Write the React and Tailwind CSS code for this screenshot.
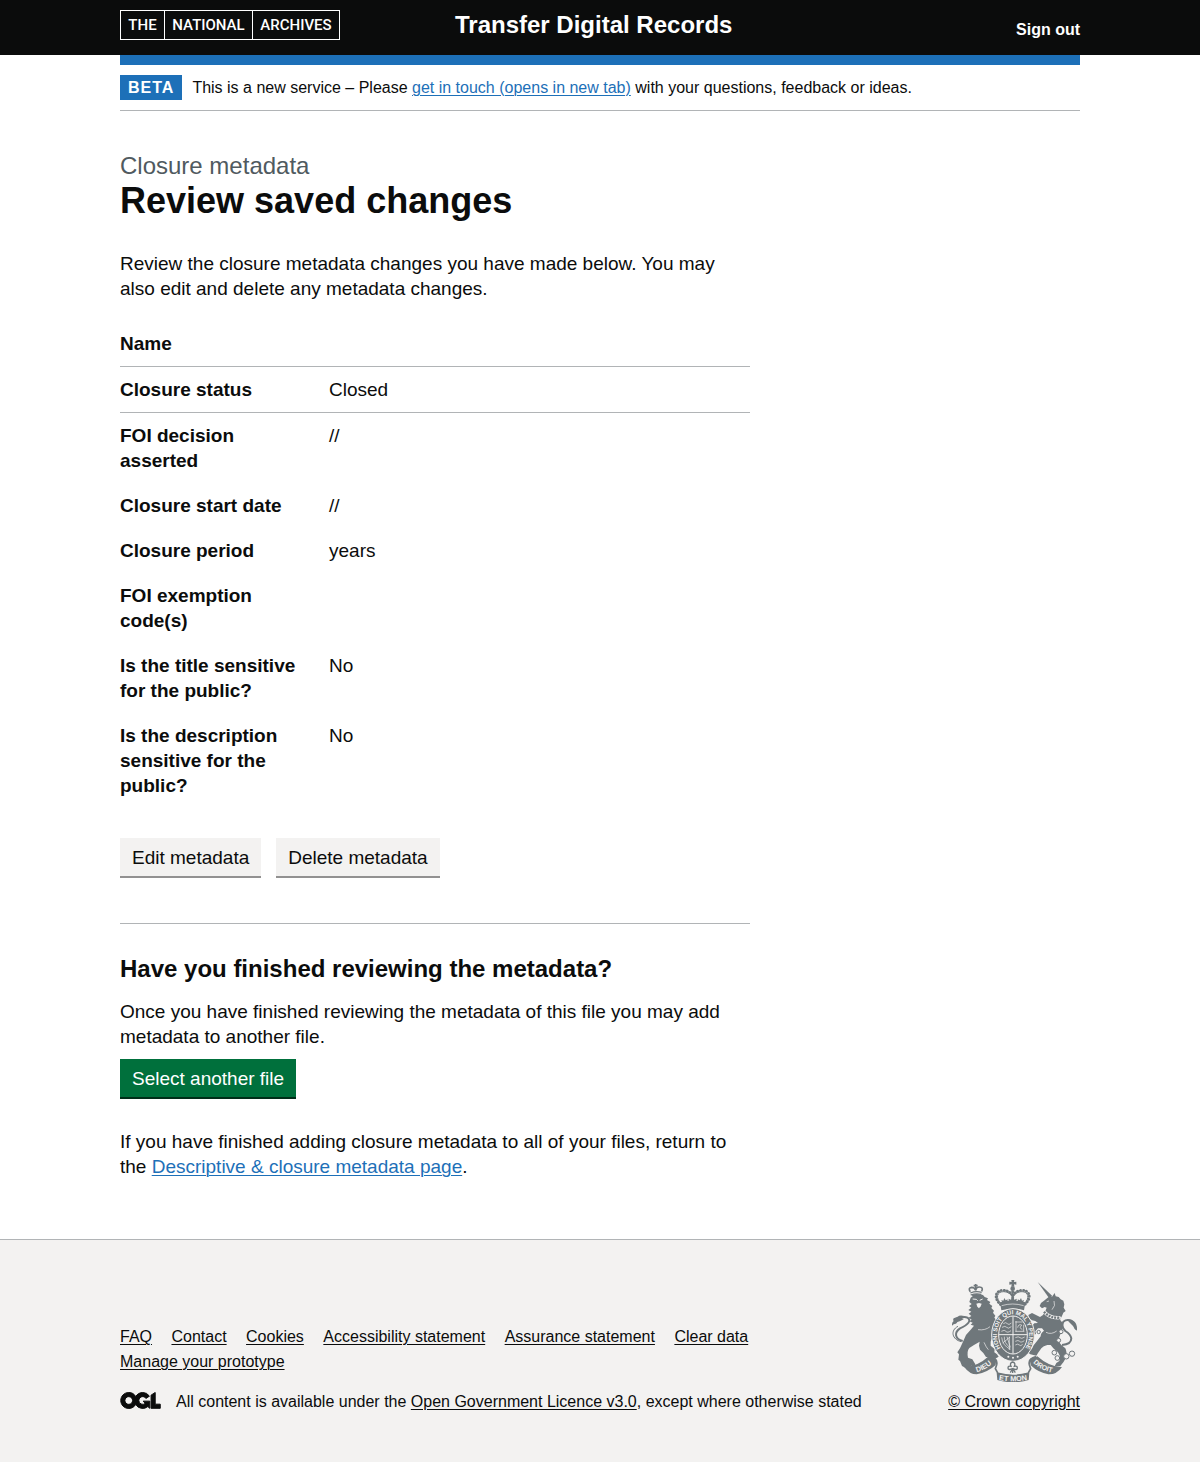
import React from "react";

const summaryRows = [
  { label: "Name", value: "", ruled: true },
  { label: "Closure status", value: "Closed", ruled: true },
  { label: "FOI decision asserted", value: "//" },
  { label: "Closure start date", value: "//" },
  { label: "Closure period", value: "years" },
  { label: "FOI exemption code(s)", value: "" },
  { label: "Is the title sensitive for the public?", value: "No" },
  { label: "Is the description sensitive for the public?", value: "No" },
];

const footerLinks = [
  "FAQ",
  "Contact",
  "Cookies",
  "Accessibility statement",
  "Assurance statement",
  "Clear data",
  "Manage your prototype",
];

function ArchivesLogo() {
  return (
    <a
      href="#"
      aria-label="The National Archives"
      className="flex h-[30px] w-[220px] border border-white font-[Roboto,sans-serif] text-[15px] leading-7 font-medium text-white"
    >
      <span className="w-11 border-r border-white text-center">THE</span>
      <span className="w-[88px] border-r border-white text-center">NATIONAL</span>
      <span className="flex-1 text-center">ARCHIVES</span>
    </a>
  );
}

function OglLogo() {
  return (
    <svg
      aria-hidden="true"
      focusable="false"
      viewBox="-6 -6 495 208"
      className="h-[17px] w-[41px] shrink-0"
      fill="currentColor"
      stroke="currentColor"
      strokeWidth="12"
    >
      <path d="M421.5 142.8V.1l-50.7 32.3v161.1h112.4v-50.7zm-122.3-9.6A47.12 47.12 0 0 1 221 97.8c0-26 21.1-47.1 47.1-47.1 16.7 0 31.4 8.7 39.7 21.8l42.7-27.2A97.63 97.63 0 0 0 268.1 0c-36.5 0-68.3 20.1-85.1 49.7A98 98 0 0 0 97.8 0C43.9 0 0 43.9 0 97.9s43.9 97.8 97.8 97.8c36.5 0 68.3-20.1 85.1-49.7a97.76 97.76 0 0 0 149.6 25.4l19.4 22.2h3v-87.8h-80l24.3 27.4zM97.8 145c-26 0-47.1-21.1-47.1-47.1s21.1-47.1 47.1-47.1 47.1 21.1 47.1 47.1S123.8 145 97.8 145" />
    </svg>
  );
}

const INK = "#6f777b";
const PAPER = "#f3f2f1";

function Crest() {
  return (
    <svg aria-hidden="true" focusable="false" viewBox="36 29 375 306" className="h-[102px] w-[125px]" fill={INK}>
      {/* imperial crown */}
      <path d="M214 29h9l-1 6 7-1v9l-7-1 1 7h-9l1-7-7 1v-9l7 1z" />
      <circle cx="218" cy="55" r="7" />
      <g fill="none" stroke={INK} strokeLinecap="round">
        <path d="M182 103C158 82 168 59 190 60c14 0 24 8 28 18 4-10 14-18 28-18 22-1 32 22 8 43" strokeWidth="8" strokeDasharray="1 8" />
        <path d="M184 101C164 82 172 64 190 64c14 0 24 8 28 18 4-10 14-18 28-18 18 0 26 18 6 37" strokeWidth="3" />
        <path d="M218 64v36" strokeWidth="9" strokeDasharray="1 8" />
      </g>
      <path d="M180 96q38-12 76 0l-4 24q-34-10-68 0z" />
      <path d="M185 106q33-10 66 0" fill="none" stroke={PAPER} strokeWidth="2" />
      <path d="M187 97l-3-8 6 2 3-8 4 7 6-3-2 9zM249 97l3-8-6 2-3-8-4 7-6-3 2 9zM209 94l-4-9 8 3 5-9 5 9 8-3-4 9z" />

      {/* lion */}
      <g fill="none" stroke={INK}>
        <path d="M91 64q-8-11 4-13 9 0 12 9 1-10 11-10 13 0 7 13" strokeWidth="5" />
        <path d="M101 46h12M107 41v19" strokeWidth="5" />
        <path d="M91 68q17-7 34-2M92 74q16-6 32-2" strokeWidth="4" />
      </g>
      <path d="M92 82L98 78 94 73Q110 68 129 74L134 80 144 84 141 89 151 95 148 100 157 107 154 113 162 121 159 127 166 136 163 142 171 152 168 160 174 172 170 188 158 198 152 214 152 226 164 236 163 246 171 252 176 259 164 266 152 260 138 260 130 248 120 238 117 226 119 214 102 224 88 233Q80 242 84 262L97 267 106 282 102 289 94 286 89 292 76 292 66 287 60 272 55 268 57 252 52 246 60 234 70 212 78 194 92 178 102 166 92 163 98 157 88 153 95 148 86 142 94 137 86 130 94 124 85 119 94 112 87 107 95 101 88 95Z" />
      <path d="M98 86l11 1 4 4M119 90l9-4" fill="none" stroke={PAPER} strokeWidth="3" />
      <path d="M109 100l8-2 8 2-3 8-5 6-5-5z" fill={PAPER} />
      <path d="M114 178q22 3 36-9M132 216q7 16 13 22" fill="none" stroke={PAPER} strokeWidth="2" />
      <path d="M68 212c-24-6-26-26-8-38 24-10 36-24 22-32q-8-4-18 0" fill="none" stroke={INK} strokeWidth="6" />
      <path d="M64 214c-28-6-34-34-10-46" fill="none" stroke={INK} strokeWidth="3" />
      <path d="M36 166q-1-10 5-14-3-4 0-8 6-3 12-5 6-6 20-2l-8 6 6 4-12 6q-8 1-11 7-6-1-12 6z" />

      {/* unicorn */}
      <path d="M293 35l34 48 10-6z" />
      <path d="M303 98L312 91 322 83 330 77 336 79 344 68 347 78 356 80 362 87 370 91 373 102 371 112 377 122 370 127 366 137 360 148 368 158Q372 170 366 180L358 200Q354 214 364 224L376 234Q382 246 378 262L370 276 361 287 344 288 349 278 358 272 360 258 354 246 340 234 332 224 322 224Q310 226 304 234L294 248 289 256 271 252 261 244 264 237 275 237 281 225 294 208 302 198Q302 188 312 181L306 174 294 174 286 183 288 191 278 195 267 183 271 172 283 159 294 158 286 152 276 150 268 144 265 134 276 128 288 134 300 140 309 134 316 122 320 112 314 110 306 114 299 107Z" />
      <path d="M312 124q17 20 46 18" fill="none" stroke={PAPER} strokeWidth="10" strokeLinecap="round" />
      <path d="M312 124q17 20 46 18" fill="none" stroke={INK} strokeWidth="7" strokeDasharray="6 3" />
      <path d="M320 94l7-2M342 92q6 14-6 26" fill="none" stroke={PAPER} strokeWidth="2" />
      <path d="M366 224q28-2 28-20-2-12-18-22-14-14-6-28 10-8 22-3 12 7 16 26" fill="none" stroke={INK} strokeWidth="6" />
      <path d="M382 147q12-2 20 6 10 8 9 28-8-4-12-14l-12-12z" />
      <path d="M318 186q16 8 32-4" fill="none" stroke={PAPER} strokeWidth="2" />
      <g fill={PAPER} stroke={INK} strokeWidth="3">
        <circle cx="296" cy="185" r="5" />
        <circle cx="363" cy="184" r="6" />
        <circle cx="356" cy="210" r="6" />
        <circle cx="343" cy="247" r="7" />
        <circle cx="352" cy="263" r="7" />
        <circle cx="379" cy="258" r="8" />
        <circle cx="396" cy="250" r="8" />
      </g>

      {/* garter and shield */}
      <ellipse cx="219" cy="194" rx="64" ry="79" stroke={PAPER} strokeWidth="3" />
      <ellipse cx="219" cy="194" rx="43" ry="57" fill="none" stroke={PAPER} strokeWidth="3" />
      <path d="M219 138v112M177 193h84" stroke={PAPER} strokeWidth="3" />
      <g fill="none" stroke={PAPER} strokeWidth="2">
        <path d="M190 160q8-6 12 0t12-2M186 171q10-6 14 0t14-2M184 183q10-6 14 0t15-2" />
        <path d="M226 155h22M226 183h27M228 152v32M251 163v20M233 172q2-12 12-8l-5 8 7 6" />
        <path d="M185 201q2 24 26 36M193 199q-2 18 18 34M201 199l10 32M208 199v40M188 218l22-18" />
        <path d="M226 202q10-5 14 0t14-2M226 213q9-5 13 0t14-2M226 224q8-5 12 0t10-2" />
      </g>
      <defs>
        <path id="garter-motto" d="M183 235A48 62 0 1 1 255 235" />
        <path id="scroll-left" d="M103 307Q134 302 161 276" />
        <path id="scroll-mid" d="M172 328Q219 338 266 328" />
        <path id="scroll-right" d="M276 274Q302 301 340 307" />
      </defs>
      <g fill={PAPER} className="font-[Liberation_Sans,sans-serif] font-bold" textAnchor="middle">
        <text fontSize="18">
          <textPath href="#garter-motto" startOffset="50%">
            HONI SOIT QUI MAL Y PENSE
          </textPath>
        </text>
      </g>
      <g fill={PAPER}>
        <circle cx="205" cy="259" r="3" />
        <circle cx="219" cy="262" r="3" />
        <circle cx="233" cy="259" r="3" />
      </g>

      {/* motto scroll */}
      <path d="M72 289q38 2 75-32l22 9-2 18q-24 22-57 28-21 0-38-23z" />
      <path d="M366 290q-37 1-74-32l-23 9 3 18q23 22 53 27 25 1 41-22z" />
      <path d="M150 259q24 6 20 24l-4 12 8 14q45 13 90 0l8-14-4-12q-4-18 20-24" fill="none" stroke={INK} strokeWidth="5" />
      <path d="M170 307q49 14 98 0l-2 22q-47 14-94 0z" />
      <g fill={PAPER} className="font-[Liberation_Sans,sans-serif] font-bold" textAnchor="middle">
        <text fontSize="22">
          <textPath href="#scroll-left" startOffset="50%">
            DIEU
          </textPath>
        </text>
        <text fontSize="22">
          <textPath href="#scroll-mid" startOffset="50%">
            ET MON
          </textPath>
        </text>
        <text fontSize="21">
          <textPath href="#scroll-right" startOffset="50%">
            DROIT
          </textPath>
        </text>
      </g>

      {/* plant badge */}
      <g fill="none" stroke={INK} strokeWidth="4">
        <path d="M218 308v-14M211 307l6-11M226 307l-7-11" />
        <path d="M218 295q-14 6-14-2 0-7 9-5-5-10 5-13 10 3 5 13 9-2 9 5 0 8-14 2z" />
      </g>
    </svg>
  );
}

const link = "text-[#1d70b8] underline decoration-1 underline-offset-2";
const footerLink = "text-[#0b0c0c] underline decoration-1 underline-offset-2";
const container = "mx-4 max-w-[960px] sm:mx-8 lg:mx-auto";

export default function App() {
  return (
    <div className="bg-white font-[Liberation_Sans,Arial,sans-serif] text-[19px] leading-[25px] text-[#0b0c0c] antialiased">
      <header className="bg-[#0b0c0c] text-white">
        <div className={container}>
          <div className="flex min-h-[55px] flex-wrap items-start justify-between pt-2.5 md:flex-nowrap">
            <div className="md:w-1/3">
              <ArchivesLogo />
            </div>
            <a href="#" className="grow text-[24px] leading-[30px] font-bold md:pl-[15px]">
              Transfer Digital Records
            </a>
            <a href="#" className="pt-2 text-[16px] leading-6 font-bold">
              Sign out
            </a>
          </div>
        </div>
      </header>

      <div className={container}>
        <div className="h-2.5 bg-[#1d70b8]" />
        <div className="flex items-center gap-2.5 border-b border-[#b1b4b6] py-2.5 text-[16px]">
          <strong className="bg-[#1d70b8] px-2 tracking-[1px] text-white">BETA</strong>
          <p>
            This is a new service – Please{" "}
            <a href="#" className={link}>
              get in touch (opens in new tab)
            </a>{" "}
            with your questions, feedback or ideas.
          </p>
        </div>

        <main className="max-w-[630px] pt-10 pb-[60px]">
          <span className="block text-[24px] leading-[30px] text-[#505a5f]">Closure metadata</span>
          <h1 className="mb-[30px] text-[36px] leading-10 font-bold">Review saved changes</h1>
          <p className="mb-5">
            Review the closure metadata changes you have made below. You may also edit and delete any metadata changes.
          </p>

          <dl className="mb-[30px]">
            {summaryRows.map((row) => (
              <div key={row.label} className={row.ruled ? "flex border-b border-[#b1b4b6] py-2.5" : "flex py-2.5"}>
                <dt className="w-[209px] shrink-0 pr-5 font-bold">{row.label}</dt>
                <dd className="flex-1">{row.value}</dd>
              </div>
            ))}
          </dl>

          <div className="flex flex-wrap gap-[15px]">
            <button type="button" className="h-10 border-b-2 border-[#929191] bg-[#f3f2f1] px-3">
              Edit metadata
            </button>
            <button type="button" className="h-10 border-b-2 border-[#929191] bg-[#f3f2f1] px-3">
              Delete metadata
            </button>
          </div>

          <hr className="mt-[45px] mb-[30px] border-t border-[#b1b4b6]" />

          <h2 className="mb-[15px] text-[24px] leading-[30px] font-bold">Have you finished reviewing the metadata?</h2>
          <p className="mb-2.5">
            Once you have finished reviewing the metadata of this file you may add metadata to another file.
          </p>
          <button type="button" className="mb-[30px] block h-10 border-b-2 border-[#002d18] bg-[#00703c] px-3 text-white">
            Select another file
          </button>
          <p>
            If you have finished adding closure metadata to all of your files, return to the{" "}
            <a href="#" className={link}>
              Descriptive &amp; closure metadata page
            </a>
            .
          </p>
        </main>
      </div>

      <footer className="border-t border-[#b1b4b6] bg-[#f3f2f1] pt-10 pb-12 text-[16px]">
        <div className={container}>
          <div className="flex flex-wrap items-end justify-between gap-y-8 md:flex-nowrap">
            <div className="max-w-[760px]">
              <ul className="mb-[15px] max-w-[700px]">
                {footerLinks.map((label) => (
                  <React.Fragment key={label}>
                    <li className="mr-[15px] inline-block">
                      <a href="#" className={footerLink}>
                        {label}
                      </a>
                    </li>{" "}
                  </React.Fragment>
                ))}
              </ul>
              <div className="flex gap-[15px]">
                <span className="pt-[3px]">
                  <OglLogo />
                </span>
                <p>
                  All content is available under the{" "}
                  <a href="#" className={footerLink}>
                    Open Government Licence v3.0
                  </a>
                  , except where otherwise stated
                </p>
              </div>
            </div>
            <a href="#" className="flex shrink-0 flex-col items-center gap-[7px] underline decoration-1 underline-offset-2">
              <Crest />
              <span>© Crown copyright</span>
            </a>
          </div>
        </div>
      </footer>
    </div>
  );
}
